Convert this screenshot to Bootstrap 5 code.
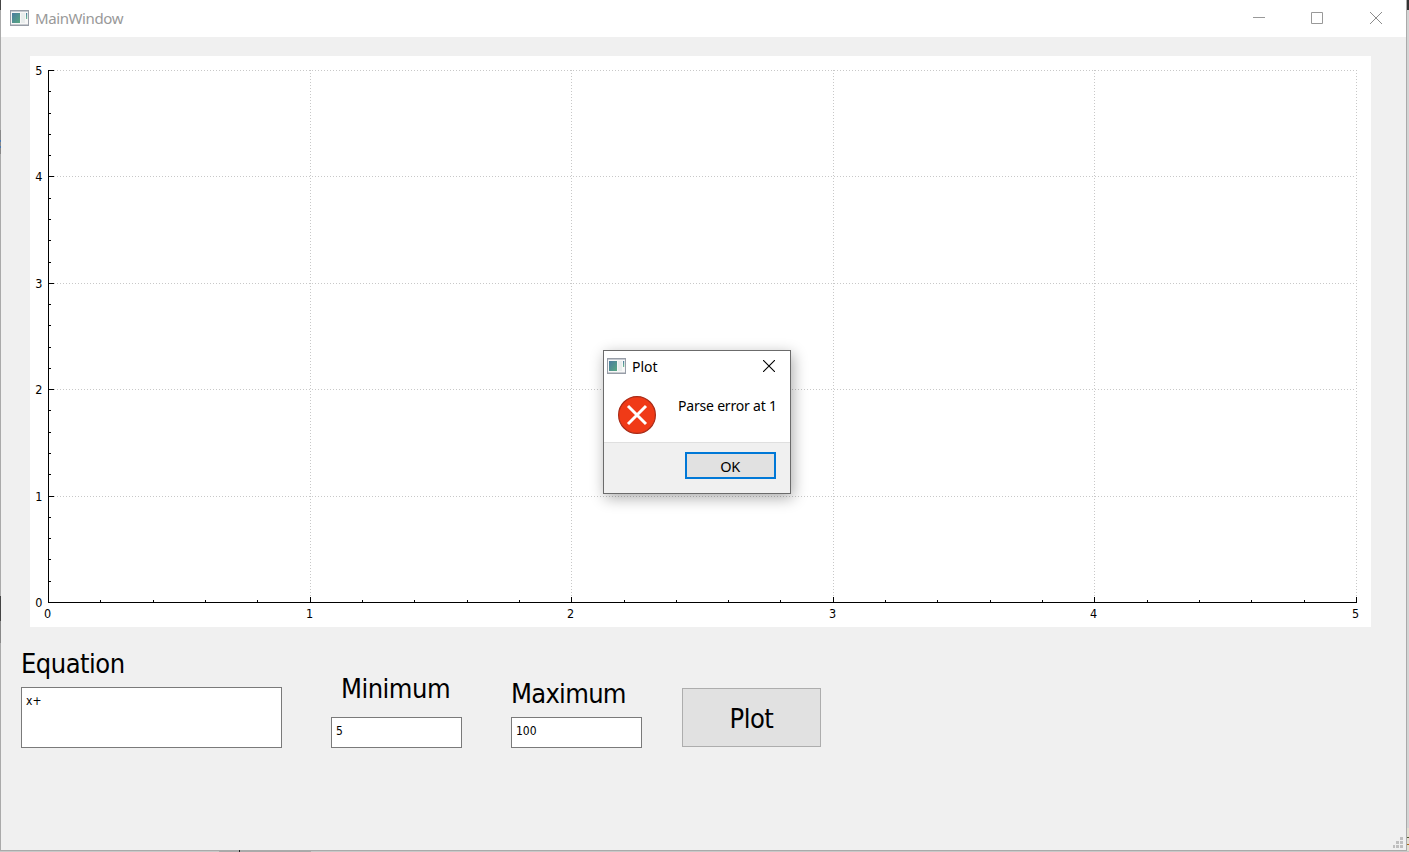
<!DOCTYPE html>
<html lang="en">
<head>
<meta charset="utf-8">
<meta name="viewport" content="width=device-width, initial-scale=1">
<title>MainWindow</title>
<link href="https://cdn.jsdelivr.net/npm/bootstrap@5.3.0/dist/css/bootstrap.min.css" rel="stylesheet">
<style>
html,body{height:100%;overflow:hidden}
body{background:linear-gradient(#333 0 10px,#d4d4d4 10px 778px,#e2dfd0 778px);font-family:"Noto Sans","Open Sans",sans-serif;color:#000}
.desk-edge{height:852px}
.main-window{width:1407px;height:851px;background:#f0f0f0;border:1px solid #aaa;border-top:0}
.title-row{height:37px;padding:0 24px 2px 9px}
.title-text{font-size:15px;line-height:20px;color:#999;margin-left:6px;letter-spacing:-.4px}
.win-buttons{gap:47px}
.work-area{padding:19px 0 0 20px}
.plot-panel{width:1341px;height:571px;margin-left:9px}
.plot-panel text{font:12.5px "DejaVu Sans Condensed","DejaVu Sans",sans-serif;font-stretch:condensed}
.controls{height:121px}
.big-label,.plot-btn{font:27px/36px "DejaVu Sans Condensed","DejaVu Sans",sans-serif;font-stretch:condensed;letter-spacing:-.5px;white-space:nowrap}
.label-max{letter-spacing:-.7px}
.edit{border:1px solid #7a7a7a;border-radius:0;background:#fff;color:#000;font:12px/16px "DejaVu Sans Condensed","DejaVu Sans",sans-serif;font-stretch:condensed;padding:5px 4px;resize:none}
.edit-lg{width:261px;height:61px}
.edit-sm{width:131px;height:31px}
.plot-btn{width:139px;height:59px;margin-bottom:1px;margin-left:40px;border:1px solid #adadad;border-radius:0;background:#e1e1e1;color:#000;padding:2px 0 0}
.group{margin-left:49px;width:131px}
.dialog-box{left:603px;top:350px;width:188px;height:144px;border:1px solid #6b6b6b;background:#fff;box-shadow:2px 4px 14px 0 rgba(0,0,0,.33);font-size:14px;line-height:20px}
.dialog-title{height:31px;padding:0 15px 1px 3px}
.dialog-caption{margin-left:6px;padding-top:2px}
.dialog-msg{height:60px;padding:14px 0 0 14px}
.msg-text{margin-left:22px;letter-spacing:-.2px}
.dialog-foot{background:#f0f0f0;border-top:1px solid #dfdfdf;height:51px;padding:9px 14px 0 0}
.ok-btn{width:91px;height:27px;border:2px solid #0078d7;border-radius:0;background:#e1e1e1;color:#000;padding:1px 1px 0 0;font-size:14.5px;line-height:22px;letter-spacing:-.4px}
.grip{right:2px;bottom:1px}
</style>
</head>
<body>
<svg width="0" height="0" class="position-absolute" aria-hidden="true">
<defs>
<linearGradient id="pane" x1="0" y1="0" x2="1" y2="1"><stop offset="0" stop-color="#4a7ba0"/><stop offset="1" stop-color="#58a881"/></linearGradient>
<linearGradient id="bar" x1="0" y1="0" x2="0" y2="1"><stop offset="0" stop-color="#4a7ba0"/><stop offset="1" stop-color="#6fbf92"/></linearGradient>
<symbol id="app" viewBox="0 0 19 16"><path fill="#979da7" d="M0 0h19v16H0z"/><path fill="#f7f7f7" d="M1 2h17v12.5H1z"/><path fill="#c5c9d0" d="M1 1h17v1H1z"/><path fill="url(#pane)" d="M2 3h8v10H2z"/><path fill="#e9eded" d="M11 3h4v10h-4z"/><path fill="url(#bar)" d="M16 3h1.2v6H16z"/></symbol>
</defs>
</svg>
<div class="desk-edge position-relative">
<main class="main-window d-flex flex-column position-relative">
  <header class="title-row bg-white d-flex align-items-center justify-content-between">
    <div class="d-flex align-items-center">
      <svg width="19" height="16"><use href="#app"/></svg>
      <span class="title-text">MainWindow</span>
    </div>
    <div class="win-buttons d-flex align-items-center">
      <svg width="12" height="12" class="overflow-visible" shape-rendering="crispEdges"><path fill="#999" d="M1 5h12v1H1z"/></svg>
      <svg width="12" height="12"><path fill="none" stroke="#999" d="M.5.5h11v11H.5z"/></svg>
      <svg width="12" height="12"><path fill="none" stroke="#8c8c8c" d="M0 0l12 12M12 0L0 12"/></svg>
    </div>
  </header>
  <div class="work-area">
    <svg id="plot" class="plot-panel bg-white d-block" viewBox="30 56 1341 571"></svg>
    <div class="controls d-flex align-items-end">
      <div class="d-flex flex-column">
        <label class="big-label" for="eq" style="margin-bottom:5px">Equation</label>
        <textarea id="eq" class="edit edit-lg d-block" spellcheck="false">x+</textarea>
      </div>
      <div class="group d-flex flex-column">
        <label class="big-label" for="min" style="margin-bottom:10px;padding-left:10px">Minimum</label>
        <textarea id="min" class="edit edit-sm d-block overflow-hidden">5</textarea>
      </div>
      <div class="group d-flex flex-column">
        <label class="big-label label-max" for="max" style="margin-bottom:5px">Maximum</label>
        <textarea id="max" class="edit edit-sm d-block overflow-hidden">100</textarea>
      </div>
      <button class="btn plot-btn">Plot</button>
    </div>
  </div>
  <svg class="grip position-absolute" width="12" height="12" shape-rendering="crispEdges"><path fill="#bfbfbf" d="M8 0h3v3H8zM4 4h3v3H4zM8 4h3v3H8zM1 8h2v3H1zM4 8h3v3H4zM8 8h3v3H8z"/></svg>
</main>
<section class="dialog-box position-absolute" role="alertdialog">
  <div class="dialog-title d-flex align-items-center justify-content-between">
    <div class="d-flex align-items-center"><svg width="19" height="16"><use href="#app"/></svg><span class="dialog-caption">Plot</span></div>
    <svg width="12" height="12"><path fill="none" stroke="#000" stroke-width="1.1" d="M0 0l12 12M12 0L0 12"/></svg>
  </div>
  <div class="dialog-msg d-flex">
    <svg width="38" height="38" viewBox="0 0 38 38"><circle cx="19" cy="19" r="18.4" fill="#f03a17" stroke="#a92b17" stroke-width="1.2"/><path fill="none" stroke="#fff" stroke-width="3" d="M10 10l18 18M28 10L10 28"/></svg>
    <span class="msg-text">Parse error at 1</span>
  </div>
  <div class="dialog-foot d-flex justify-content-end"><button class="btn ok-btn">OK</button></div>
</section>
<svg class="position-absolute start-0 top-0 pe-none" width="1409" height="852" shape-rendering="crispEdges"><path fill="#444" d="M0 0h1v10H0zM0 596h1v25H0z"/><path fill="#888" d="M0 621h1v22H0zM0 130h1v24H0z"/><path fill="#4a78b0" d="M0 140h1v2H0zM0 146h1v2H0z"/><path fill="#c8c8c8" d="M0 851h1409v1H0z"/><path fill="#aaa" d="M219 851h92v1h-92z"/><path fill="#222" d="M239 850h1v2h-1z"/><path fill="#d4d4d4" d="M1407 778h2v50h-2z"/><path fill="#555b35" d="M1407 837h2v1h-2z"/><path fill="#a66a18" d="M1407 844h2v1h-2z"/></svg>
</div>
<script src="https://cdn.jsdelivr.net/npm/bootstrap@5.3.0/dist/js/bootstrap.bundle.min.js"></script>
<script>
// Axes from 0 to 5 with five subticks per unit
const L=48,R=1356,T=70,B=602,sx=(R-L)/5,sy=(B-T)/5;
let grid='',ticks='',labels='';
for(let i=0;i<=25;i++){
  const x=Math.round(L+i*sx/5)+.5,y=Math.round(B-i*sy/5)+.5,n=i%5===0?6:3;
  ticks+=`M${x} ${B+1}v${-n}M${L} ${y}h${n}`;
  if(i%5===0){
    if(i){grid+=`M${x} ${B}V${T}M${L} ${y}H${R}`;}
    labels+=`<text x="${x-1}" y="618" text-anchor="middle">${i/5}</text><text x="42.5" y="${y+4.5}" text-anchor="end">${i/5}</text>`;
  }
}
document.getElementById('plot').innerHTML=`<g shape-rendering="crispEdges" fill="none"><path stroke="#c8c8c8" stroke-dasharray="1 2" d="${grid}"/><path stroke="#000" d="M${L+.5} ${T}V${B+.5}H${R+1}${ticks}"/></g>${labels}`;
</script>
</body>
</html>
